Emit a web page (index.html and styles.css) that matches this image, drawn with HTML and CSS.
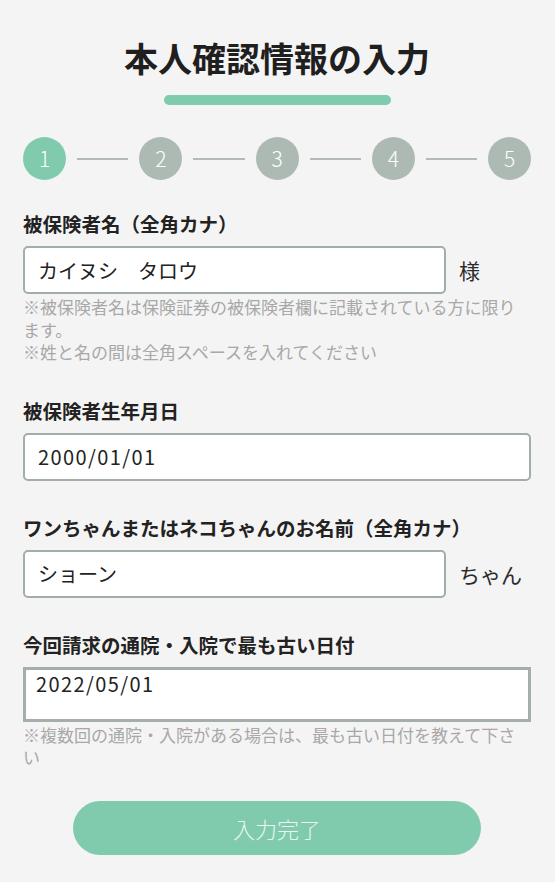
FILE: index.html
```html
<!DOCTYPE html>
<html lang="ja">
<head>
<meta charset="utf-8">
<title>本人確認情報の入力</title>
<link rel="stylesheet" href="styles.css">
</head>
<body>
<main class="page">
  <h1 class="title">本人確認情報の入力</h1>
  <div class="title-bar"></div>

  <ol class="steps">
    <li class="step step-active">1</li>
    <li class="step-line"></li>
    <li class="step">2</li>
    <li class="step-line"></li>
    <li class="step">3</li>
    <li class="step-line"></li>
    <li class="step">4</li>
    <li class="step-line"></li>
    <li class="step">5</li>
  </ol>

  <section class="group group-first">
    <label class="label">被保険者名（全角カナ）</label>
    <div class="row">
      <input class="input input-short" type="text" value="カイヌシ　タロウ">
      <span class="suffix">様</span>
    </div>
    <p class="note">※被保険者名は保険証券の被保険者欄に記載されている方に限ります。</p>
    <p class="note note-next">※姓と名の間は全角スペースを入れてください</p>
  </section>

  <section class="group">
    <label class="label">被保険者生年月日</label>
    <input class="input input-full input-date" type="text" value="2000/01/01">
  </section>

  <section class="group">
    <label class="label">ワンちゃんまたはネコちゃんのお名前（全角カナ）</label>
    <div class="row">
      <input class="input input-short" type="text" value="ショーン">
      <span class="suffix">ちゃん</span>
    </div>
  </section>

  <section class="group">
    <label class="label">今回請求の通院・入院で最も古い日付</label>
    <textarea class="area input-date">2022/05/01</textarea>
    <p class="note">※複数回の通院・入院がある場合は、最も古い日付を教えて下さい</p>
  </section>

  <button class="submit" type="button">入力完了</button>
</main>
</body>
</html>
```
FILE: styles.css
```css
html, body {
  margin: 0;
  padding: 0;
  background: #f4f4f4;
}

body {
  font-family: "Noto Sans CJK JP", "Noto Sans", sans-serif;
  color: #222222;
}

.page {
  padding: 37px 24px 0 23px;
}

.title {
  margin: 0;
  text-align: center;
  font-size: 34px;
  font-weight: 700;
  line-height: 42px;
  color: #1f1f1f;
}

.title-bar {
  width: 227px;
  height: 10px;
  margin: 16px auto 0;
  border-radius: 5px;
  background: #80cbad;
}

.steps {
  display: flex;
  align-items: center;
  list-style: none;
  margin: 32px 0 0;
  padding: 0;
}

.step {
  flex: 0 0 43px;
  width: 43px;
  height: 43px;
  border-radius: 50%;
  background: #adbab4;
  color: #ffffff;
  font-size: 21px;
  font-weight: 300;
  line-height: 43px;
  text-align: center;
}

.step-active {
  background: #80cbad;
}

.step-line {
  flex: 1;
  height: 2px;
  margin: 0 11px;
  background: #b3bbb7;
}

.group {
  margin-top: 34px;
}

.group-first {
  margin-top: 31px;
}

.label {
  display: block;
  margin: 0 0 9px;
  font-size: 19.5px;
  font-weight: 700;
  line-height: 26px;
  color: #222222;
}

.row {
  display: flex;
  align-items: center;
}

.input {
  display: block;
  box-sizing: border-box;
  height: 48px;
  padding: 0 13px;
  border: 2.5px solid #a3ada9;
  border-radius: 5px;
  background: #ffffff;
  font-family: inherit;
  font-size: 20px;
  color: #222222;
  outline: none;
}

.input-short {
  width: 423px;
}

.input-full {
  width: 100%;
}

.input-date {
  letter-spacing: 1.4px;
}

.suffix {
  margin-left: 13px;
  font-size: 21px;
  color: #2a2a2a;
}

.area {
  display: block;
  box-sizing: border-box;
  width: 100%;
  height: 55px;
  margin: 0;
  padding: 0 10px;
  border: 3px solid #a5aeaa;
  border-radius: 0;
  background: #ffffff;
  font-family: inherit;
  font-size: 20px;
  line-height: 28px;
  color: #222222;
  resize: none;
  overflow: hidden;
  outline: none;
}

.note {
  margin: 2px 0 0;
  font-size: 17px;
  line-height: 22.5px;
  color: #a8a8a8;
}

.note-next {
  margin-top: 0;
}

.submit {
  display: block;
  width: 408px;
  height: 54px;
  margin: 32px auto 0;
  border: none;
  border-radius: 27px;
  background: #80cbad;
  color: #eaf6f0;
  font-family: inherit;
  font-size: 22px;
  font-weight: 300;
}
```
